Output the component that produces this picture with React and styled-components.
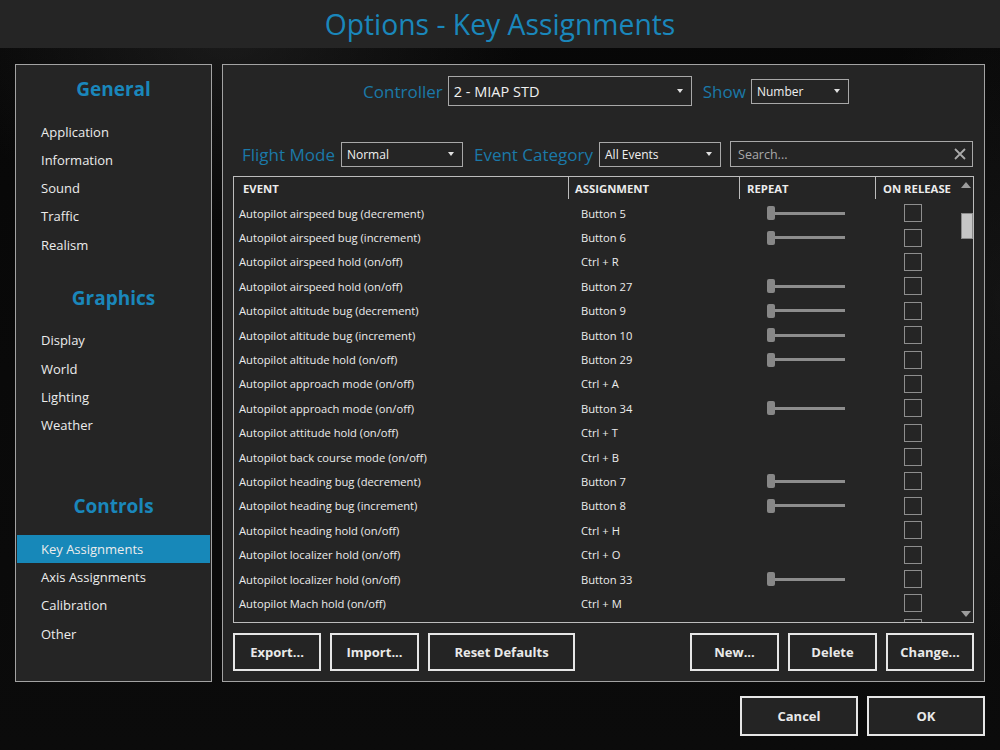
import React from "react";
import styled, { createGlobalStyle } from "styled-components";

const Global = createGlobalStyle`
  html, body { margin: 0; padding: 0; background: #000; }
  body { font-family: "Open Sans", "Noto Sans", sans-serif; }
  * { box-sizing: border-box; }
`;

const BLUE = "#1a87bb";
const LABEL_BLUE = "#1b79a8";
const FONT = `"Open Sans", "Noto Sans", sans-serif`;

const Screen = styled.div`
  width: 1000px;
  height: 750px;
  display: flex;
  flex-direction: column;
  background:
    radial-gradient(ellipse 420px 260px at 230px 40px, rgba(60,60,60,0.35), transparent 70%),
    radial-gradient(ellipse 200px 500px at 1000px 300px, rgba(40,40,40,0.35), transparent 70%),
    linear-gradient(180deg, #070707, #0b0b0b);
  font-family: ${FONT};
  overflow: hidden;
`;

const TitleBar = styled.header`
  height: 48px;
  flex: none;
  background: #252525;
  display: flex;
  align-items: center;
  justify-content: center;
`;

const Title = styled.h1`
  margin: 0;
  font-weight: 400;
  font-size: 28.3px;
  color: ${BLUE};
  padding-bottom: 1px;
`;

const Body = styled.main`
  flex: 1;
  display: flex;
  flex-direction: column;
  padding: 16px 15px 14px 15px;
  min-height: 0;
`;

const Panels = styled.div`
  display: grid;
  grid-template-columns: 197px 1fr;
  grid-template-rows: minmax(0, 1fr);
  gap: 10px;
  height: 618px;
  flex: none;
`;

const Panel = styled.section`
  background: #252525;
  border: 1px solid #a3a3a3;
  min-height: 0;
  overflow: hidden;
`;

const Sidebar = styled(Panel)`
  padding: 0 1px;
  display: flex;
  flex-direction: column;
`;

const SectionHeading = styled.h2`
  margin: ${(p) => p.$top}px 0 14.5px 0;
  height: 28px;
  line-height: 28px;
  text-align: center;
  font-size: 19px;
  font-weight: 700;
  color: ${BLUE};
`;

const NavList = styled.ul`
  list-style: none;
  margin: 0;
  padding: 0;
`;

const NavItem = styled.li`
  height: 28.25px;
  line-height: 28.25px;
  padding-left: 24px;
  font-size: 13px;
  color: #ececec;
  background: ${(p) => (p.$active ? "#1788b9" : "transparent")};
`;

const Main = styled(Panel)`
  display: flex;
  flex-direction: column;
  padding: 11px 10px 10px 10px;
`;

const TopRow = styled.div`
  height: 30px;
  flex: none;
  display: flex;
  align-items: center;
  justify-content: center;
  padding-left: 5px;
`;

const FilterRow = styled.div`
  margin-top: 35px;
  height: 26px;
  flex: none;
  display: flex;
  align-items: center;
  padding-left: 9px;
  padding-right: 1px;
`;

const Label = styled.span`
  font-size: 17px;
  color: ${LABEL_BLUE};
  margin-right: ${(p) => p.$gap ?? 5}px;
  white-space: nowrap;
`;

const Select = styled.div`
  width: ${(p) => p.$w}px;
  height: ${(p) => p.$h}px;
  border: 1px solid #a8a8a8;
  display: flex;
  align-items: center;
  justify-content: space-between;
  padding: 0 8px 0 5px;
  color: #f0f0f0;
  font-size: ${(p) => p.$fs}px;
  margin-right: ${(p) => p.$mr ?? 0}px;
  flex: none;
`;

const Caret = styled.span`
  width: 0;
  height: 0;
  border-left: 3.5px solid transparent;
  border-right: 3.5px solid transparent;
  border-top: 4px solid #e0e0e0;
`;

const Search = styled.div`
  flex: 1;
  height: 26px;
  border: 1px solid #a8a8a8;
  display: flex;
  align-items: center;
  justify-content: space-between;
  padding: 0 5px 0 7px;
  color: #a9a9a9;
  font-size: 12.5px;
`;

const Table = styled.div`
  margin-top: 9px;
  flex: 1;
  border: 1px solid #bcbcbc;
  display: flex;
  overflow: hidden;
  min-height: 0;
`;

const TableBody = styled.div`
  flex: 1;
  overflow: hidden;
`;

const COLS = "335px 171px 136px 83px";

const HeadRow = styled.div`
  display: grid;
  grid-template-columns: ${COLS};
  height: 24px;
`;

const HeadCell = styled.div`
  font-size: 11.3px;
  font-weight: 700;
  color: #ececec;
  padding-left: ${(p) => p.$pl}px;
  line-height: 24px;
  border-right: ${(p) => (p.$div ? "1px solid #bcbcbc" : "none")};
  height: 22px;
  overflow: visible;
`;

const Row = styled.div`
  display: grid;
  grid-template-columns: ${COLS};
  height: 24.4px;
  align-items: center;
  font-size: 11.2px;
  color: #ececec;
`;

const Cell = styled.div`
  padding-left: ${(p) => p.$pl}px;
  white-space: nowrap;
  display: flex;
  align-items: center;
`;

const SliderTrack = styled.div`
  position: relative;
  width: 78px;
  height: 14px;
  display: flex;
  align-items: center;
  &::before {
    content: "";
    position: absolute;
    left: 4px;
    right: 0;
    height: 3px;
    background: #8d8d8d;
  }
`;

const SliderThumb = styled.span`
  position: relative;
  width: 8px;
  height: 14px;
  border-radius: 2px;
  background: #878787;
`;

const Check = styled.span`
  width: 18px;
  height: 18px;
  border: 1px solid #8e8e8e;
`;

const ScrollBar = styled.div`
  width: 15px;
  flex: none;
  display: flex;
  flex-direction: column;
  align-items: center;
`;

const ScrollHead = styled.div`
  width: 100%;
  height: 22px;
  display: flex;
  justify-content: center;
  padding-top: 5px;
`;

const ArrowUp = styled.span`
  width: 0;
  height: 0;
  border-left: 5px solid transparent;
  border-right: 5px solid transparent;
  border-bottom: 6px solid #9d9d9d;
`;

const ArrowDown = styled.span`
  width: 0;
  height: 0;
  border-left: 5px solid transparent;
  border-right: 5px solid transparent;
  border-top: 6px solid #9d9d9d;
  margin-bottom: 5px;
`;

const Thumb = styled.span`
  margin-top: 14px;
  width: 12px;
  margin-left: 3px;
  height: 26px;
  background: #c6c6c6;
  border: 1px solid #8a8a8a;
`;

const Spacer = styled.div`
  flex: 1;
`;

const ButtonRow = styled.div`
  margin-top: 10px;
  display: flex;
  gap: 9px;
  height: 38px;
  flex: none;
`;

const Button = styled.button`
  width: ${(p) => p.$w}px;
  height: ${(p) => p.$h ?? 38}px;
  background: #242424;
  border: 2px solid #e6e6e6;
  color: #e9e9e9;
  font-family: ${FONT};
  font-weight: 700;
  font-size: 13px;
  padding: 0;
  cursor: pointer;
`;

const Footer = styled.div`
  margin-top: 14px;
  display: flex;
  justify-content: flex-end;
  gap: 9px;
`;

const rows = [
  ["Autopilot airspeed bug (decrement)", "Button 5", true],
  ["Autopilot airspeed bug (increment)", "Button 6", true],
  ["Autopilot airspeed hold (on/off)", "Ctrl + R", false],
  ["Autopilot airspeed hold (on/off)", "Button 27", true],
  ["Autopilot altitude bug (decrement)", "Button 9", true],
  ["Autopilot altitude bug (increment)", "Button 10", true],
  ["Autopilot altitude hold (on/off)", "Button 29", true],
  ["Autopilot approach mode (on/off)", "Ctrl + A", false],
  ["Autopilot approach mode (on/off)", "Button 34", true],
  ["Autopilot attitude hold (on/off)", "Ctrl + T", false],
  ["Autopilot back course mode (on/off)", "Ctrl + B", false],
  ["Autopilot heading bug (decrement)", "Button 7", true],
  ["Autopilot heading bug (increment)", "Button 8", true],
  ["Autopilot heading hold (on/off)", "Ctrl + H", false],
  ["Autopilot localizer hold (on/off)", "Ctrl + O", false],
  ["Autopilot localizer hold (on/off)", "Button 33", true],
  ["Autopilot Mach hold (on/off)", "Ctrl + M", false],
  ["", "", false],
];

const sections = [
  { title: "General", top: 10, items: ["Application", "Information", "Sound", "Traffic", "Realism"] },
  { title: "Graphics", top: 25, items: ["Display", "World", "Lighting", "Weather"] },
  { title: "Controls", top: 53, items: ["Key Assignments", "Axis Assignments", "Calibration", "Other"] },
];

const CloseIcon = () => (
  <svg width="14" height="14" viewBox="0 0 14 14">
    <path d="M2 2 L12 12 M12 2 L2 12" stroke="#a9a9a9" strokeWidth="1.8" />
  </svg>
);

export default function App() {
  return (
    <Screen>
      <Global />
      <TitleBar>
        <Title>Options - Key Assignments</Title>
      </TitleBar>
      <Body>
        <Panels>
          <Sidebar>
            {sections.map((s) => (
              <React.Fragment key={s.title}>
                <SectionHeading $top={s.top}>{s.title}</SectionHeading>
                <NavList>
                  {s.items.map((it) => (
                    <NavItem key={it} $active={it === "Key Assignments"}>
                      {it}
                    </NavItem>
                  ))}
                </NavList>
              </React.Fragment>
            ))}
          </Sidebar>
          <Main>
            <TopRow>
              <Label>Controller</Label>
              <Select $w={244} $h={30} $fs={14.5} $mr={11}>
                <span>2 - MIAP STD</span>
                <Caret />
              </Select>
              <Label>Show</Label>
              <Select $w={98} $h={25} $fs={12}>
                <span>Number</span>
                <Caret />
              </Select>
            </TopRow>
            <FilterRow>
              <Label $gap={6}>Flight Mode</Label>
              <Select $w={122} $h={25} $fs={12} $mr={11}>
                <span>Normal</span>
                <Caret />
              </Select>
              <Label $gap={6}>Event Category</Label>
              <Select $w={122} $h={25} $fs={12} $mr={9}>
                <span>All Events</span>
                <Caret />
              </Select>
              <Search>
                <span>Search...</span>
                <CloseIcon />
              </Search>
            </FilterRow>
            <Table>
              <TableBody>
                <HeadRow>
                  <HeadCell $pl={9} $div>EVENT</HeadCell>
                  <HeadCell $pl={6} $div>ASSIGNMENT</HeadCell>
                  <HeadCell $pl={7} $div>REPEAT</HeadCell>
                  <HeadCell $pl={7} $div>ON RELEASE</HeadCell>
                </HeadRow>
                {rows.map(([ev, as, sl], i) => (
                  <Row key={i}>
                    <Cell $pl={5}>{ev}</Cell>
                    <Cell $pl={12}>{as}</Cell>
                    <Cell $pl={27}>
                      {sl && (
                        <SliderTrack>
                          <SliderThumb />
                        </SliderTrack>
                      )}
                    </Cell>
                    <Cell $pl={28}>
                      <Check />
                    </Cell>
                  </Row>
                ))}
              </TableBody>
              <ScrollBar>
                <ScrollHead>
                  <ArrowUp />
                </ScrollHead>
                <Thumb />
                <Spacer />
                <ArrowDown />
              </ScrollBar>
            </Table>
            <ButtonRow>
              <Button $w={88}>Export...</Button>
              <Button $w={89}>Import...</Button>
              <Button $w={147}>Reset Defaults</Button>
              <Spacer />
              <Button $w={89}>New...</Button>
              <Button $w={89}>Delete</Button>
              <Button $w={88}>Change...</Button>
            </ButtonRow>
          </Main>
        </Panels>
        <Footer>
          <Button $w={118} $h={40}>Cancel</Button>
          <Button $w={118} $h={40}>OK</Button>
        </Footer>
      </Body>
    </Screen>
  );
}
